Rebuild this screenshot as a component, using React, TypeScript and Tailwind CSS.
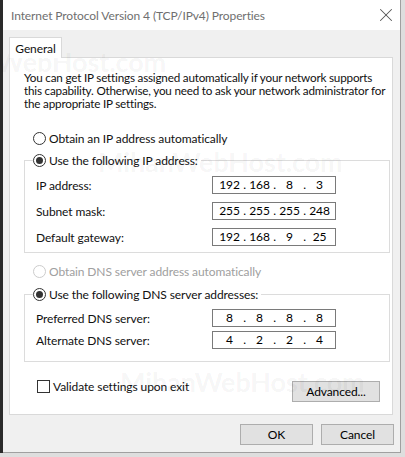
import { X } from "lucide-react";

const font = { fontFamily: 'Lato, "Noto Sans", "Liberation Sans", sans-serif' };

function Radio({ checked, disabled }: { checked?: boolean; disabled?: boolean }) {
  return (
    <span
      className={`w-[13px] h-[13px] rounded-full border flex items-center justify-center bg-white shrink-0 ${
        disabled ? "border-[#cccccc]" : "border-[#333333]"
      }`}
    >
      {checked && <span className="w-[7px] h-[7px] rounded-full bg-[#333333]" />}
    </span>
  );
}

function IpBox({ parts }: { parts: string[] }) {
  return (
    <div className="w-[124px] h-[18px] border border-[#7a7a7a] bg-white flex items-center pl-[5px] text-[12px] text-black leading-none">
      {parts.map((p, i) => (
        <div key={i} className="flex items-center">
          <span className="w-[23px] text-center">{p}</span>
          {i < 3 && <span className="w-[7px] text-center">.</span>}
        </div>
      ))}
    </div>
  );
}

function Field({ label, parts }: { label: string; parts: string[] }) {
  return (
    <div className="flex items-center h-[18px]">
      <span className="w-[176px]">{label}</span>
      <IpBox parts={parts} />
    </div>
  );
}

function Btn({ label, w }: { label: string; w: string }) {
  return (
    <button className={`${w} h-[21px] bg-[#e1e1e1] border border-[#adadad] text-[12px] text-black flex items-center justify-center`}>
      {label}
    </button>
  );
}

export default function App() {
  return (
    <div className="w-[405px] h-[457px] bg-[#dedede] overflow-hidden relative tracking-[-0.1px]" style={font}>
      <div className="absolute left-0 top-0 w-[3px] h-[453px] bg-[#2a2a2a]" />
      <div className="w-[400px] h-[453px] ml-[1px] bg-[#f0f0f0] border-r border-b border-[#a0a0a0] flex flex-col text-[12px] leading-[13px] text-[#111]">
        {/* title bar */}
        <div className="h-[30px] bg-white flex items-center justify-between pl-[10px] pr-[3px] shrink-0">
          <span className="text-[#6f6f6f] text-[12px]">Internet Protocol Version 4 (TCP/IPv4) Properties</span>
          <X className="w-[22px] h-[22px] text-[#555]" strokeWidth={1.1} />
        </div>

        {/* tabs */}
        <div className="pl-[8px] pt-[7px] flex shrink-0 h-[28px]">
          <div className="h-[21px] w-[53px] bg-white border border-b-0 border-[#d9d9d9] flex items-center justify-center relative z-10">
            General
          </div>
        </div>

        {/* tab panel */}
        <div className="-mt-px ml-[8px] w-[384px] h-[358px] bg-white border border-[#d9d9d9] flex flex-col pl-[14px] shrink-0">
          <p className="mt-[13px] w-[367px] text-[11.7px] tracking-[-0.2px]">
            You can get IP settings assigned automatically if your network supports this capability. Otherwise, you need to ask your network administrator for the appropriate IP settings.
          </p>

          <div className="mt-[20px] ml-[9px] flex items-center gap-[3px] h-[16px]">
            <Radio />
            <span>Obtain an IP address automatically</span>
          </div>

          <div className="mt-[14px] w-[366px] h-[93px] border border-[#dcdcdc] relative pt-[15px] pl-[11px] flex flex-col gap-[8px]">
            <div className="absolute -top-[9px] left-[8px] bg-white pr-[3px] flex items-center gap-[3px] h-[16px]">
              <Radio checked />
              <span>Use the following IP address:</span>
            </div>
            <Field label="IP address:" parts={["192", "168", "8", "3"]} />
            <Field label="Subnet mask:" parts={["255", "255", "255", "248"]} />
            <Field label="Default gateway:" parts={["192", "168", "9", "25"]} />
          </div>

          <div className="mt-[10px] ml-[9px] flex items-center gap-[3px] h-[16px] text-[#a0a0a0]">
            <Radio disabled />
            <span>Obtain DNS server address automatically</span>
          </div>

          <div className="mt-[15px] w-[366px] h-[68px] border border-[#dcdcdc] relative pt-[14px] pl-[11px] flex flex-col gap-[4px]">
            <div className="absolute -top-[9px] left-[8px] bg-white pr-[3px] flex items-center gap-[3px] h-[16px]">
              <Radio checked />
              <span>Use the following DNS server addresses:</span>
            </div>
            <Field label="Preferred DNS server:" parts={["8", "8", "8", "8"]} />
            <Field label="Alternate DNS server:" parts={["4", "2", "2", "4"]} />
          </div>

          <div className="mt-[17px] flex items-start">
            <div className="ml-[13px] w-[255px] flex items-center gap-[3px] h-[14px]">
              <span className="w-[13px] h-[13px] border border-[#333333] bg-white" />
              <span>Validate settings upon exit</span>
            </div>
            <div className="mt-[2px]">
              <Btn label="Advanced..." w="w-[88px]" />
            </div>
          </div>
        </div>

        {/* bottom buttons */}
        <div className="flex gap-[8px] pl-[239px] mt-[9px]">
          <Btn label="OK" w="w-[73px]" />
          <Btn label="Cancel" w="w-[73px]" />
        </div>
      </div>

      {/* watermark */}
      <div className="absolute left-[98px] top-[142px] text-[27px] font-bold text-black/[0.05] pointer-events-none">MihanWebHost.com</div>
      <div className="absolute left-[120px] top-[362px] text-[27px] font-bold text-black/[0.05] pointer-events-none">MihanWebHost.com</div>
      <div className="absolute -left-[4px] top-[42px] text-[27px] font-bold text-black/[0.05] pointer-events-none">WebHost.com</div>
    </div>
  );
}
